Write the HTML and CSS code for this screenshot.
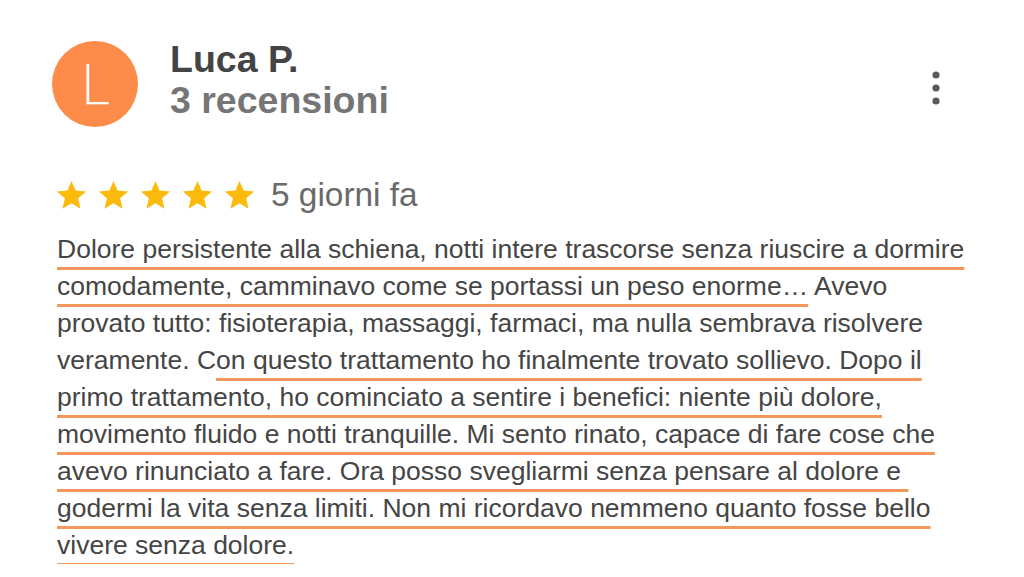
FILE: index.html
```html
<!DOCTYPE html>
<html lang="it">
<head>
<meta charset="utf-8">
<title>Recensione</title>
<link rel="stylesheet" href="styles.css">
</head>
<body>
<div class="review">
  <div class="header">
    <div class="avatar">L</div>
    <div class="who">
      <div class="name">Luca P.</div>
      <div class="count">3 recensioni</div>
    </div>
    <svg class="kebab" width="12" height="34" viewBox="0 0 12 34">
      <circle cx="6" cy="4" r="3.6" fill="#5a5a5a"/>
      <circle cx="6" cy="17" r="3.6" fill="#5a5a5a"/>
      <circle cx="6" cy="30" r="3.6" fill="#5a5a5a"/>
    </svg>
  </div>
  <div class="rating">
    <div class="stars">
      <svg class="star" viewBox="0 0 24 24"><path d="M12 17.27L18.18 21l-1.64-7.03L22 9.24l-7.19-.61L12 2 9.19 8.63 2 9.24l5.46 4.73L5.82 21z"/></svg>
      <svg class="star" viewBox="0 0 24 24"><path d="M12 17.27L18.18 21l-1.64-7.03L22 9.24l-7.19-.61L12 2 9.19 8.63 2 9.24l5.46 4.73L5.82 21z"/></svg>
      <svg class="star" viewBox="0 0 24 24"><path d="M12 17.27L18.18 21l-1.64-7.03L22 9.24l-7.19-.61L12 2 9.19 8.63 2 9.24l5.46 4.73L5.82 21z"/></svg>
      <svg class="star" viewBox="0 0 24 24"><path d="M12 17.27L18.18 21l-1.64-7.03L22 9.24l-7.19-.61L12 2 9.19 8.63 2 9.24l5.46 4.73L5.82 21z"/></svg>
      <svg class="star" viewBox="0 0 24 24"><path d="M12 17.27L18.18 21l-1.64-7.03L22 9.24l-7.19-.61L12 2 9.19 8.63 2 9.24l5.46 4.73L5.82 21z"/></svg>
    </div>
    <span class="when">5 giorni fa</span>
  </div>
  <div class="text">
    <div class="line"><span class="hl">Dolore persistente alla schiena, notti intere trascorse senza riuscire a dormire</span></div>
    <div class="line"><span class="hl">comodamente, camminavo come se portassi un peso enorme…</span> Avevo</div>
    <div class="line">provato tutto: fisioterapia, massaggi, farmaci, ma nulla sembrava risolvere</div>
    <div class="line">veramente. C<span class="hl">on questo trattamento ho finalmente trovato sollievo. Dopo il</span></div>
    <div class="line"><span class="hl">primo trattamento, ho cominciato a sentire i benefici: niente più dolore,</span></div>
    <div class="line"><span class="hl">movimento fluido e notti tranquille. Mi sento rinato, capace di fare cose che</span></div>
    <div class="line"><span class="hl">avevo rinunciato a fare. Ora posso svegliarmi senza pensare al dolore e&nbsp;</span></div>
    <div class="line"><span class="hl">godermi la vita senza limiti. Non mi ricordavo nemmeno quanto fosse bello</span></div>
    <div class="line"><span class="hl">vivere senza dolore.</span></div>
  </div>
</div>
</body>
</html>
```
FILE: styles.css
```css
html, body {
  margin: 0;
  padding: 0;
  background: #ffffff;
}
body {
  font-family: "Liberation Sans", Arial, sans-serif;
  color: #454545;
}
.review {
  padding: 41px 0 0 52px;
}
.header {
  display: flex;
  align-items: flex-start;
  padding-right: 82px;
}
.avatar {
  width: 86px;
  height: 86px;
  border-radius: 50%;
  background: #fd8c4b;
  color: #ffffff;
  font-family: "DejaVu Sans", sans-serif;
  font-weight: 200;
  font-size: 55px;
  line-height: 88px;
  text-align: center;
  flex-shrink: 0;
}
.who {
  margin-left: 32px;
  margin-top: -2px;
  font-weight: bold;
  font-size: 37.5px;
  line-height: 41px;
}
.name {
  color: #444444;
}
.count {
  color: #757575;
}
.kebab {
  margin-left: auto;
  margin-top: 30px;
}
.rating {
  display: flex;
  align-items: center;
  margin-top: 51px;
  height: 34px;
}
.stars {
  display: flex;
  gap: 7px;
  margin-left: 2px;
}
.star {
  width: 35px;
  height: 35px;
  fill: #fbba0c;
}
.when {
  margin-left: 14px;
  font-size: 33.4px;
  color: #6a6a6a;
}
.text {
  margin-top: 19px;
  font-size: 26.5px;
  line-height: 37px;
  white-space: nowrap;
  margin-left: 5px;
}
.hl {
  text-decoration: underline;
  text-decoration-color: #f4975d;
  text-decoration-thickness: 3px;
  text-underline-offset: 9px;
  text-decoration-skip-ink: none;
}
```
